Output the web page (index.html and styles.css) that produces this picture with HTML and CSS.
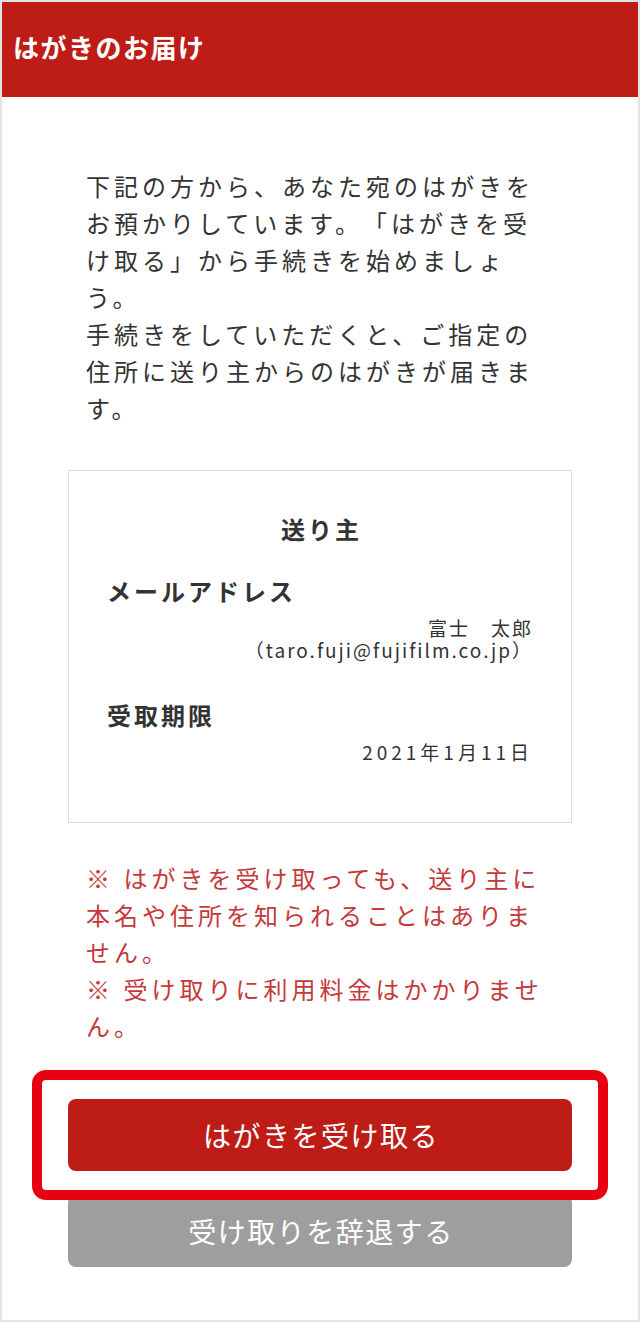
FILE: index.html
```html
<!DOCTYPE html>
<html lang="ja">
<head>
<meta charset="utf-8">
<title>はがきのお届け</title>
<link rel="stylesheet" href="styles.css">
</head>
<body>
<div class="frame">
  <header class="header">
    <h1 class="header-title">はがきのお届け</h1>
  </header>
  <main class="main">
    <p class="intro">下記の方から、あなた宛のはがきをお預かりしています。「はがきを受け取る」から手続きを始めましょう。<br>手続きをしていただくと、ご指定の住所に送り主からのはがきが届きます。</p>

    <section class="card">
      <h2 class="card-title">送り主</h2>
      <h3 class="card-label">メールアドレス</h3>
      <div class="card-value">
        <p class="card-line">富士　太郎</p>
        <p class="card-line">（taro.fuji@fujifilm.co.jp）</p>
      </div>
      <h3 class="card-label card-label-gap">受取期限</h3>
      <div class="card-value card-date">
        <p class="card-line">2021年1月11日</p>
      </div>
    </section>

    <div class="notes">
      <p class="note">※ はがきを受け取っても、送り主に本名や住所を知られることはありません。</p>
      <p class="note">※ 受け取りに利用料金はかかりません。</p>
    </div>

    <div class="actions">
      <button class="btn btn-primary" type="button">はがきを受け取る</button>
      <button class="btn btn-secondary" type="button">受け取りを辞退する</button>
      <div class="highlight"></div>
    </div>
  </main>
</div>
</body>
</html>
```

FILE: styles.css
```css
* {
  box-sizing: border-box;
}

html, body {
  margin: 0;
  padding: 0;
  background: #ffffff;
}

body {
  font-family: "Noto Sans CJK JP", "Noto Sans", sans-serif;
  color: #333333;
  text-spacing-trim: space-all;
}

.frame {
  width: 640px;
  height: 1322px;
  border: 2px solid #e4e4e4;
  background: #ffffff;
  overflow: hidden;
}

.header {
  height: 95px;
  background: #bd1c17;
  display: flex;
  align-items: center;
  padding: 0 0 6px 11px;
}

.header-title {
  margin: 0;
  color: #ffffff;
  font-size: 26px;
  font-weight: 700;
  letter-spacing: 1.5px;
  line-height: 1;
}

.main {
  padding: 0 66px;
}

.intro {
  margin: 70px 0 0;
  padding: 0 18px;
  font-size: 24px;
  letter-spacing: 4px;
  line-height: 37px;
  color: #333333;
}

.card {
  margin-top: 44px;
  border: 1px solid #dddddd;
  padding: 40px 38px 59px 38px;
}

.card-title {
  margin: 0;
  text-align: center;
  font-size: 24px;
  font-weight: 700;
  letter-spacing: 3px;
  line-height: 36px;
  padding-left: 3px;
}

.card-label {
  margin: 26px 0 0;
  font-size: 24px;
  font-weight: 700;
  letter-spacing: 3px;
  line-height: 36px;
}

.card-label-gap {
  margin-top: 36px;
}

.card-value {
  margin: 8px 0 0;
  text-align: right;
  font-size: 19px;
  letter-spacing: 2px;
}

.card-line {
  margin: 0;
  line-height: 22px;
}

.card-date {
  letter-spacing: 4px;
}

.notes {
  margin-top: 36px;
  padding: 0 18px;
}

.note {
  margin: 0;
  font-size: 24px;
  letter-spacing: 4px;
  line-height: 37px;
  color: #c5383b;
}

.actions {
  position: relative;
  margin-top: 55px;
  display: flex;
  flex-direction: column;
  gap: 24px;
}

.btn {
  height: 72px;
  width: 100%;
  border: none;
  border-radius: 8px;
  color: #ffffff;
  font-family: "Noto Sans CJK JP", "Noto Sans", sans-serif;
  font-size: 28px;
  letter-spacing: 1.5px;
  display: flex;
  align-items: center;
  justify-content: center;
  padding: 0 0 0 2px;
}

.btn-primary {
  background: #bd1c17;
}

.btn-secondary {
  background: #9e9e9e;
}

.highlight {
  position: absolute;
  top: -29px;
  left: -36px;
  right: -36px;
  height: 130px;
  border: 10px solid #e60012;
  border-radius: 14px;
  pointer-events: none;
}
```
